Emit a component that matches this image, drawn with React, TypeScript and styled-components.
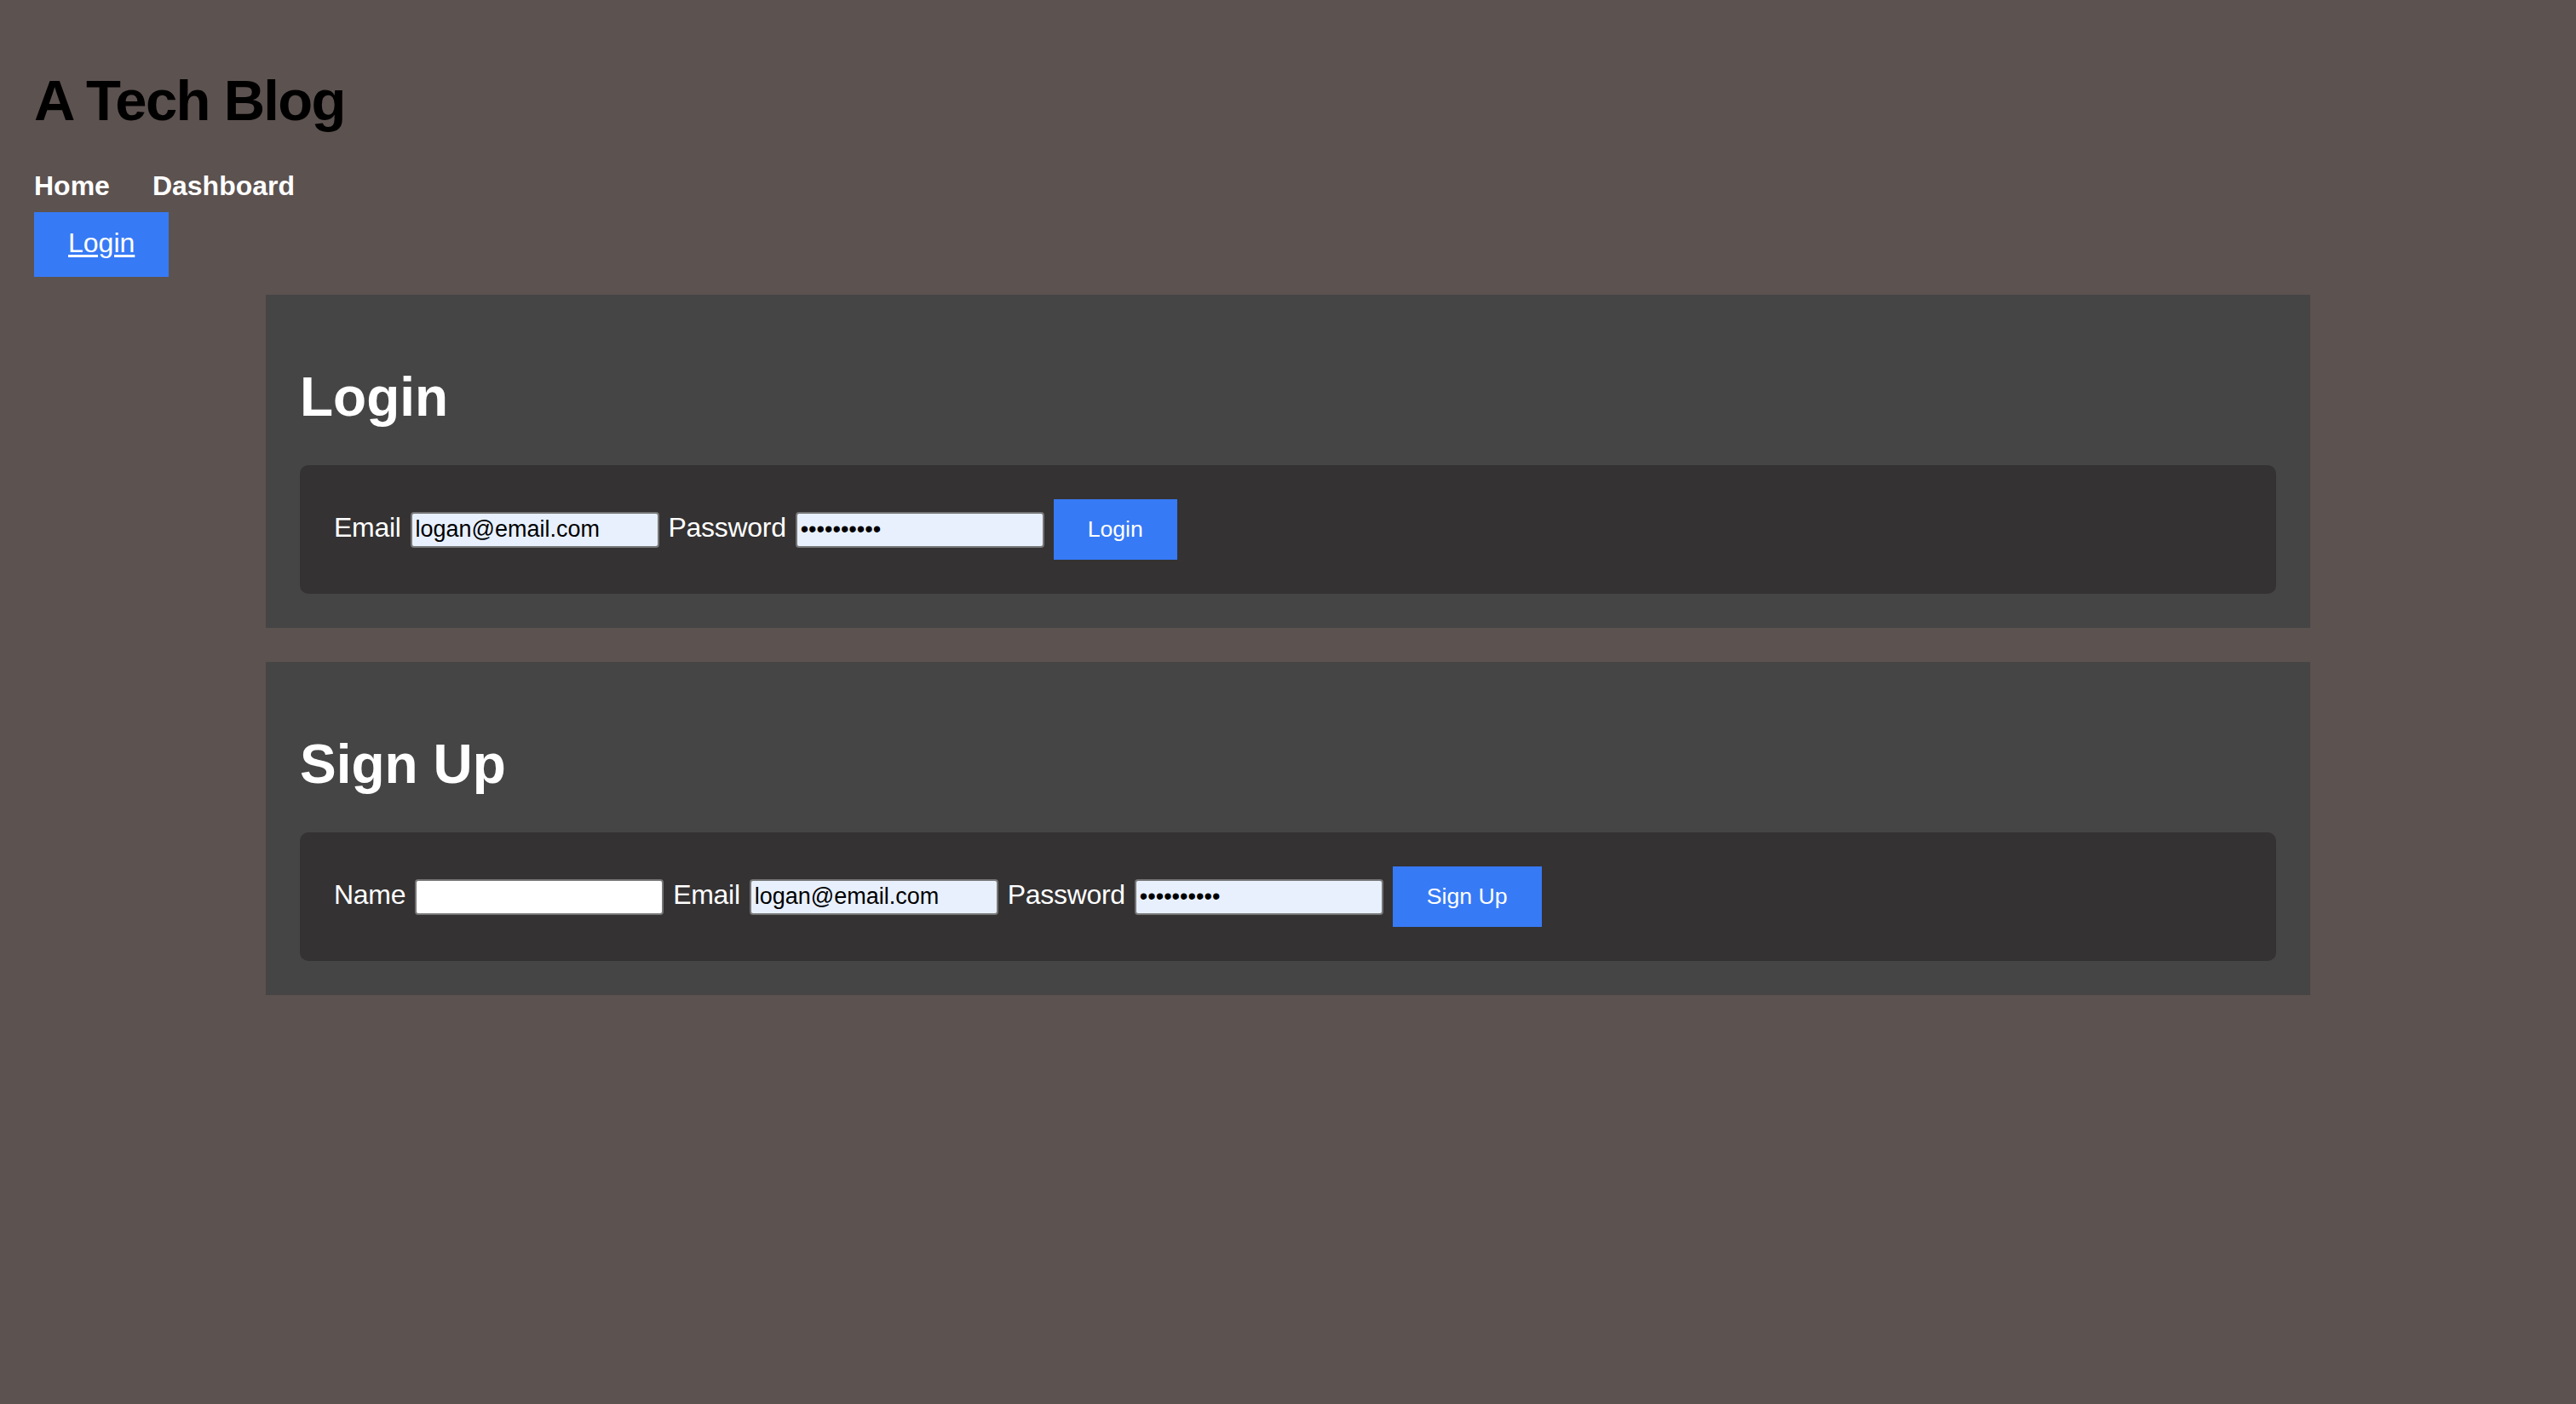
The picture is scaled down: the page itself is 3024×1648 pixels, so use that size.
import React from "react";
import styled, { createGlobalStyle } from "styled-components";

const GlobalStyle = createGlobalStyle`
  html, body {
    margin: 0;
    padding: 0;
    background: #5c5250;
    font-family: "Liberation Sans", Arial, Helvetica, sans-serif;
  }
  body {
    min-height: 1648px;
  }
`;

const Header = styled.header`
  padding: 79px 40px 0;
  display: flex;
  flex-direction: column;
  align-items: flex-start;
`;

const SiteTitle = styled.h1`
  margin: 0;
  font-size: 67px;
  font-weight: 700;
  letter-spacing: -1.7px;
  color: #000;
  line-height: normal;
`;

const Nav = styled.nav`
  margin-top: 44px;
  display: flex;
  gap: 50px;
`;

const NavLink = styled.a`
  font-size: 32px;
  font-weight: 700;
  color: #fff;
  text-decoration: none;
  line-height: 37px;
`;

const HeaderButton = styled.a`
  margin-top: 12px;
  display: inline-block;
  background: #377af5;
  color: #fff;
  font-size: 32px;
  line-height: 36px;
  padding: 18px 40px 22px;
  text-decoration: underline;
  text-underline-offset: 3px;
`;

const Main = styled.main`
  margin: 21px auto 0;
  width: 2400px;
  display: flex;
  flex-direction: column;
  gap: 40px;
`;

const Panel = styled.section`
  background: #454545;
  padding: 40px;
`;

const PanelTitle = styled.h2`
  margin: 43px 0;
  font-size: 64px;
  font-weight: 700;
  color: #fff;
  line-height: normal;
`;

const FormRow = styled.form`
  background: #343233;
  border-radius: 10px;
  padding: 40px;
  display: flex;
  align-items: baseline;
  gap: 11px;
`;

const Label = styled.label`
  font-size: 32px;
  letter-spacing: -0.3px;
  color: #fff;
  line-height: normal;
`;

const Input = styled.input<{ $filled?: boolean }>`
  box-sizing: border-box;
  width: 292px;
  height: 42px;
  border: 2px solid #767676;
  border-radius: 4px;
  padding: 0 4px;
  font-family: "Liberation Sans", Arial, sans-serif;
  font-size: 27px;
  color: #000;
  background: ${(p) => (p.$filled ? "#e8f0fe" : "#ffffff")};
  outline: none;
`;

const SubmitButton = styled.button`
  border: none;
  background: #377af5;
  color: #fff;
  font-family: "Liberation Sans", Arial, sans-serif;
  font-size: 26.67px;
  line-height: normal;
  padding: 20px 40px;
  cursor: pointer;
`;

export default function App() {
  return (
    <>
      <GlobalStyle />
      <Header>
        <SiteTitle>A Tech Blog</SiteTitle>
        <Nav>
          <NavLink href="#">Home</NavLink>
          <NavLink href="#">Dashboard</NavLink>
        </Nav>
        <HeaderButton href="#">Login</HeaderButton>
      </Header>
      <Main>
        <Panel>
          <PanelTitle>Login</PanelTitle>
          <FormRow onSubmit={(e) => e.preventDefault()}>
            <Label htmlFor="login-email">Email</Label>
            <Input id="login-email" type="text" $filled defaultValue="logan@email.com" />
            <Label htmlFor="login-password">Password</Label>
            <Input id="login-password" type="password" $filled defaultValue="password12" />
            <SubmitButton type="submit">Login</SubmitButton>
          </FormRow>
        </Panel>
        <Panel>
          <PanelTitle>Sign Up</PanelTitle>
          <FormRow onSubmit={(e) => e.preventDefault()}>
            <Label htmlFor="signup-name">Name</Label>
            <Input id="signup-name" type="text" defaultValue="" />
            <Label htmlFor="signup-email">Email</Label>
            <Input id="signup-email" type="text" $filled defaultValue="logan@email.com" />
            <Label htmlFor="signup-password">Password</Label>
            <Input id="signup-password" type="password" $filled defaultValue="password12" />
            <SubmitButton type="submit">Sign Up</SubmitButton>
          </FormRow>
        </Panel>
      </Main>
    </>
  );
}
